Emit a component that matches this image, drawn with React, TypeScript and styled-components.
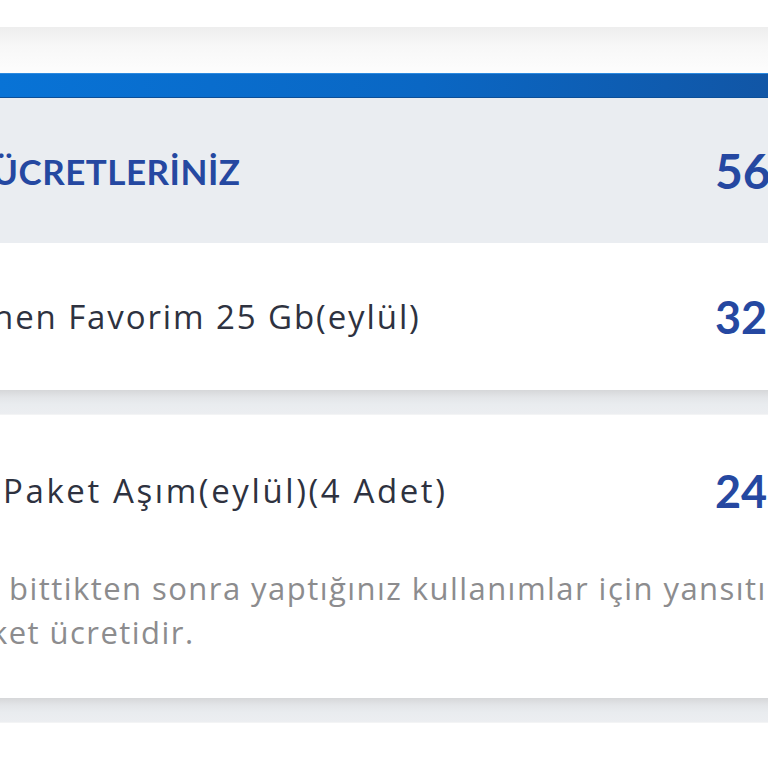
import * as React from 'react';
import styled, { createGlobalStyle } from 'styled-components';

const GlobalStyle = createGlobalStyle`
  html, body {
    margin: 0;
    padding: 0;
    background: #ffffff;
    overflow: hidden;
  }
`;

const Page = styled.div`
  width: 768px;
  height: 768px;
  overflow: hidden;
  display: flex;
  flex-direction: column;
  background: #ffffff;
  font-family: 'Open Sans', 'Liberation Sans', sans-serif;
`;

const TopSpace = styled.div`
  height: 27px;
  flex-shrink: 0;
`;

const ShadowBand = styled.div`
  height: 46px;
  flex-shrink: 0;
  background: linear-gradient(#eeeeee, #f7f7f7 40%, #fdfdfd);
`;

const BlueBar = styled.div`
  height: 23px;
  flex-shrink: 0;
  border-top: 1px solid #2c8ae0;
  border-bottom: 1px solid #0c4f98;
  background: linear-gradient(90deg, #0873d6, #0a67c4 55%, #1156a6);
`;

const Row = styled.div<{ $tone?: 'gray' | 'white'; $height: number }>`
  height: ${p => p.$height}px;
  flex-shrink: 0;
  background: ${p => (p.$tone === 'gray' ? '#eaedf1' : '#ffffff')};
  display: grid;
  grid-template-columns: 1fr 53px;
  align-items: center;
`;

const ItemCard = styled.div`
  height: 283px;
  flex-shrink: 0;
  background: #ffffff;
  display: flex;
  flex-direction: column;
`;

const ItemHead = styled.div`
  height: 151px;
  display: grid;
  grid-template-columns: 1fr 53px;
  align-items: center;
`;

const SectionTitle = styled.div<{ $shift: number }>`
  margin-left: ${p => p.$shift}px;
  white-space: nowrap;
  font-family: Lato, 'Open Sans', sans-serif;
  font-weight: 700;
  font-size: 35px;
  letter-spacing: 0.5px;
  color: #2548a1;
`;

const ItemTitle = styled.div<{ $shift: number; $spacing: number }>`
  margin-left: ${p => p.$shift}px;
  white-space: nowrap;
  font-size: 33px;
  font-weight: 500;
  letter-spacing: ${p => p.$spacing}px;
  color: #2e3240;
`;

const Amount = styled.div<{ $big?: boolean }>`
  white-space: nowrap;
  font-family: Lato, 'Open Sans', sans-serif;
  font-weight: 700;
  font-size: ${p => (p.$big ? 48 : 45)}px;
  color: #2548a1;
`;

const Note = styled.p`
  margin: 0;
  margin-left: -9px;
  white-space: nowrap;
  font-size: 31px;
  line-height: 44px;
  letter-spacing: 1.45px;
  color: #8c8c8e;
`;

const NoteFirst = styled.span`
  display: inline-block;
  padding-left: 18px;
`;

const Separator = styled.div`
  height: 24px;
  flex-shrink: 0;
  background: linear-gradient(#d6d7d9, #e3e5e8 30%, #e9ecef 60%, #eceef1);
  border-bottom: 1px solid #f3f4f5;
`;

export default function App() {
  return (
    <Page>
      <GlobalStyle />
      <TopSpace />
      <ShadowBand />
      <BlueBar />
      <Row $tone="gray" $height={145}>
        <SectionTitle $shift={-8}>ÜCRETLERİNİZ</SectionTitle>
        <Amount $big>56</Amount>
      </Row>
      <Row $height={147}>
        <ItemTitle $shift={-7} $spacing={1.9}>
          nen Favorim 25 Gb(eylül)
        </ItemTitle>
        <Amount>32</Amount>
      </Row>
      <Separator />
      <ItemCard>
        <ItemHead>
          <ItemTitle $shift={3} $spacing={2.6}>
            Paket Aşım(eylül)(4 Adet)
          </ItemTitle>
          <Amount>24</Amount>
        </ItemHead>
        <Note>
          <NoteFirst>bittikten sonra yaptığınız kullanımlar için yansıtı</NoteFirst>
          <br />
          ket ücretidir.
        </Note>
      </ItemCard>
      <Separator />
    </Page>
  );
}
